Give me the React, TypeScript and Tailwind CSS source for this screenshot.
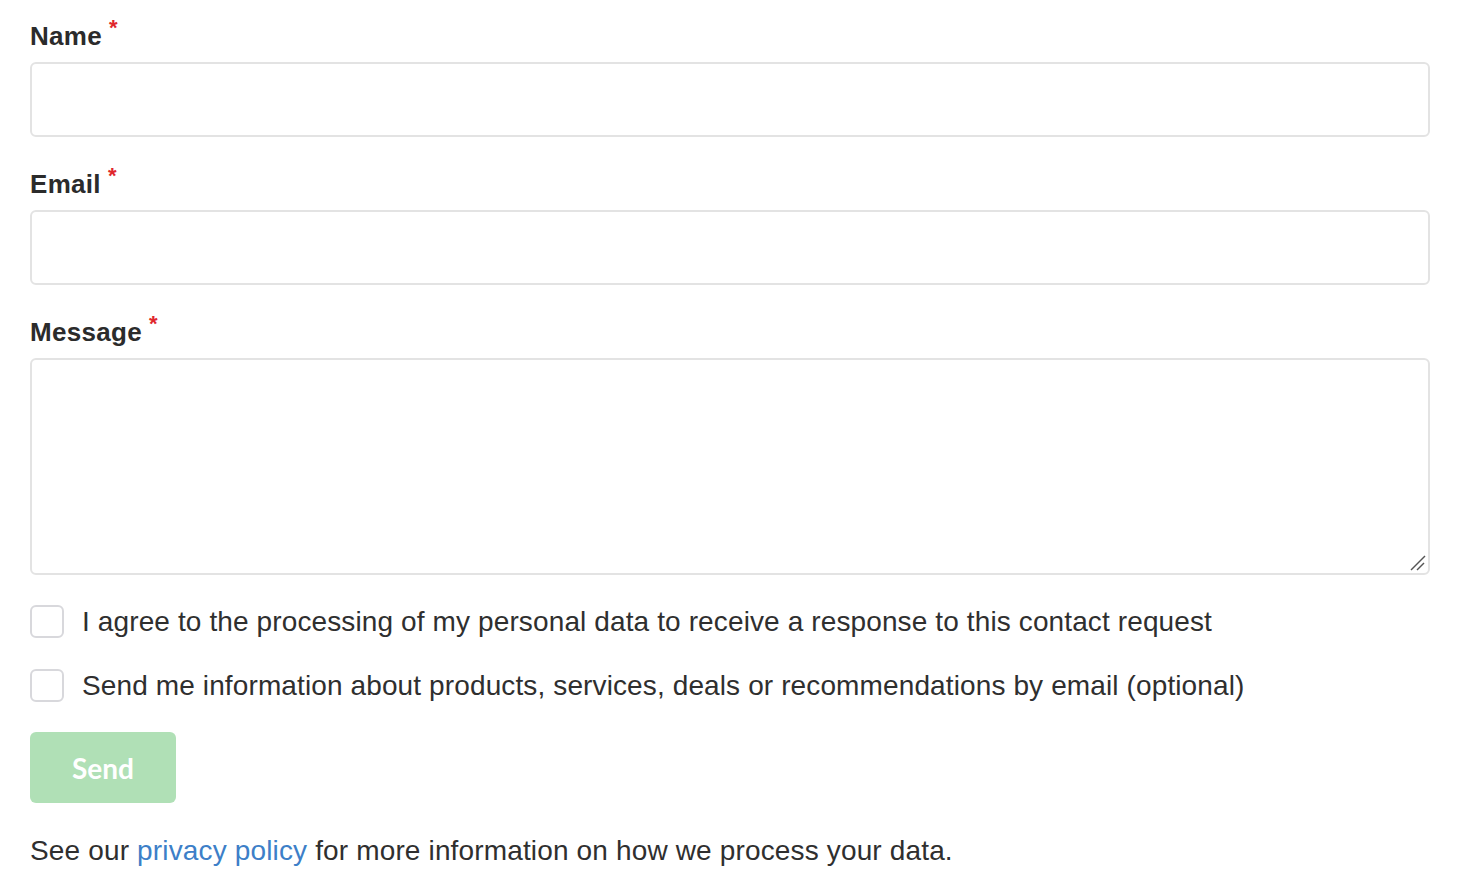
import React from "react";

function Label({ children }: { children: React.ReactNode }) {
  return (
    <label className="flex items-start text-[26px] leading-[30px] font-bold tracking-[0.3px] text-[#2b2b2b]">
      <span>{children}</span>
      <span className="ml-[7px] text-[22px] leading-[20px] text-[#e0262d] mt-[-3px]">*</span>
    </label>
  );
}

export default function App() {
  return (
    <div
      className="w-[1460px] h-[890px] bg-white px-[30px] pt-[21px]"
      style={{ fontFamily: '"Liberation Sans", Arial, sans-serif' }}
    >
      <div className="flex flex-col">
        <Label>Name</Label>
        <input className="mt-[11px] h-[75px] w-full rounded-[6px] border-2 border-[#e3e3e3] outline-none" />
        <div className="mt-[32px]">
          <Label>Email</Label>
        </div>
        <input className="mt-[11px] h-[75px] w-full rounded-[6px] border-2 border-[#e3e3e3] outline-none" />
        <div className="mt-[32px]">
          <Label>Message</Label>
        </div>
        <div className="relative mt-[11px]">
          <textarea className="block h-[217px] w-full rounded-[6px] border-2 border-[#e3e3e3] outline-none resize-none" />
          <svg
            className="absolute right-[3px] bottom-[3px]"
            width="18"
            height="18"
            viewBox="0 0 18 18"
          >
            <line x1="2" y1="16" x2="16" y2="2" stroke="#555" strokeWidth="1.4" />
            <line x1="8" y1="16" x2="15" y2="9" stroke="#555" strokeWidth="1.4" />
          </svg>
        </div>

        <div className="mt-[30px] flex items-center">
          <span className="w-[34px] h-[33px] rounded-[6px] border-2 border-[#d8d8dc] shrink-0" />
          <span className="ml-[18px] text-[28px] leading-[32px] tracking-[0.12px] text-[#2f2f2f]">
            I agree to the processing of my personal data to receive a response to this contact request
          </span>
        </div>
        <div className="mt-[31px] flex items-center">
          <span className="w-[34px] h-[33px] rounded-[6px] border-2 border-[#d8d8dc] shrink-0" />
          <span className="ml-[18px] text-[28px] leading-[32px] tracking-[0.12px] text-[#2f2f2f]">
            Send me information about products, services, deals or recommendations by email (optional)
          </span>
        </div>

        <button
          className="mt-[30px] w-[146px] h-[71px] rounded-[6px] bg-[#b0e0b6] text-white text-[28px] font-bold"
          style={{ fontFamily: 'Lato, "Liberation Sans", sans-serif' }}
        >
          Send
        </button>

        <p className="mt-[32px] text-[28px] leading-[32px] tracking-[0.15px] text-[#2f2f2f]">
          See our <span className="text-[#3d7fc8]">privacy policy</span> for more information on how we process your data.
        </p>
      </div>
    </div>
  );
}
